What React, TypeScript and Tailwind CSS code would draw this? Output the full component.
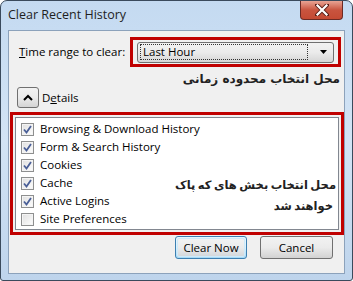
import React from "react";

const ui = { fontFamily: '"Open Sans", "Noto Sans", sans-serif' };
const fa = { fontFamily: '"DejaVu Sans", sans-serif' };

function Check({ checked }: { checked: boolean }) {
  return (
    <span className="w-[13px] h-[13px] border border-[#8e8f8f] bg-gradient-to-br from-[#dcdcdc] to-[#f8f8f8] flex items-center justify-center shrink-0">
      <span className="w-[11px] h-[11px] border border-[#f4f4f4] bg-gradient-to-br from-[#e2e2e2] to-[#fbfbfb] flex items-center justify-center">
        {checked && (
          <svg width="9" height="9" viewBox="0 0 9 9">
            <path d="M1 4.5 L3.5 7.5 L8 1" fill="none" stroke="#4a5f97" strokeWidth="1.8" />
          </svg>
        )}
      </span>
    </span>
  );
}

const items: [string, boolean][] = [
  ["Browsing & Download History", true],
  ["Form & Search History", true],
  ["Cookies", true],
  ["Cache", true],
  ["Active Logins", true],
  ["Site Preferences", false],
];

export default function App() {
  return (
    <div
      className="w-[353px] h-[281px] bg-gradient-to-b from-[#c4daf1] via-[#d3e4f5] to-[#bed4ec] border border-[#3a4a5c] rounded-t-[7px] rounded-b-[3px] flex flex-col overflow-hidden text-[11.5px] text-black"
      style={ui}
    >
      <div className="h-[29px] flex items-start justify-between pl-[7px] pr-[9px]">
        <span className="mt-[5px] text-[12.5px] text-[#1e1e1e]">Clear Recent History</span>
        <div className="w-[43px] h-[19px] rounded-b-[4px] border border-[#6b2a24] border-t-0 bg-gradient-to-b from-[#e8a394] via-[#c9543f] to-[#c44a33] flex items-center justify-center">
          <svg width="14" height="12" viewBox="0 0 14 12">
            <path d="M2 1 L12 11 M12 1 L2 11" stroke="#5a1f18" strokeWidth="4" strokeLinecap="square" />
            <path d="M2.5 1.5 L11.5 10.5 M11.5 1.5 L2.5 10.5" stroke="#ffffff" strokeWidth="2.2" strokeLinecap="square" />
          </svg>
        </div>
      </div>
      <div className="mx-[7px] h-[244px] border border-[#8ca2bb] bg-[#f0f0f0] flex flex-col">
        <div className="flex items-center mt-[6px] pl-[10px] pr-[3px] justify-between">
          <span>
            <span className="underline">T</span>ime range to clear:
          </span>
          <div className="w-[211px] h-[30px] border-[3px] border-[#c00000] flex items-center justify-center">
            <div className="w-[197px] h-[21px] border border-[#707070] rounded-[3px] bg-gradient-to-b from-[#f2f2f2] via-[#ebebeb] to-[#d6d6d6] flex items-center pl-[2px] pr-[6px]">
              <div className="flex-1 h-[16px] border border-dotted border-[#333] flex items-center pl-[2px] mr-[12px]">
                Last Hour
              </div>
              <svg width="7" height="4" viewBox="0 0 7 4">
                <path d="M0 0 L7 0 L3.5 4 Z" fill="#000" />
              </svg>
            </div>
          </div>
        </div>
        <div dir="rtl" className="pr-[4px] mt-[2px] h-[20px] flex items-center text-[12px] font-bold text-[#222]" style={fa}>
          محل انتخاب محدوده زمانی
        </div>
        <div className="flex items-center pl-[8px] mt-[-2px] gap-[3px]">
          <div className="w-[22px] h-[21px] border border-[#707070] rounded-[3px] bg-gradient-to-b from-[#f2f2f2] via-[#ebebeb] to-[#d4d4d4] flex items-center justify-center">
            <svg width="10" height="7" viewBox="0 0 10 7">
              <path d="M1 6 L5 2 L9 6" fill="none" stroke="#000" strokeWidth="2" />
            </svg>
          </div>
          <span>
            D<span className="underline">e</span>tails
          </span>
        </div>
        <div className="mt-[4px] ml-[1px] w-[334px] h-[123px] border-[3px] border-[#c00000] p-[2px]">
          <div className="h-full bg-white border border-[#828790] flex pl-[5px] pt-[2px]">
            <div className="flex flex-col w-[140px] shrink-0">
              {items.map(([label, c]) => (
                <div key={label} className="h-[18px] flex items-center gap-[6px]">
                  <Check checked={c} />
                  <span className="whitespace-nowrap">{label}</span>
                </div>
              ))}
            </div>
            <div dir="rtl" className="flex-1 flex flex-col items-start pr-[2px] pt-[55px] font-bold text-[11.5px] text-[#222] leading-[21px] whitespace-nowrap [word-spacing:-1.5px]" style={fa}>
              <span>محل انتخاب بخش های که پاک</span>
              <span className="pr-[3px]">خواهند شد</span>
            </div>
          </div>
        </div>
        <div className="flex justify-end gap-[13px] pr-[11px] mt-[1px]">
          <div className="w-[72px] h-[23px] rounded-[3px] border border-[#3c7fb1] bg-gradient-to-b from-[#eaf6fd] via-[#d9f0fc] to-[#a7d9f5] flex items-center justify-center p-[1px]">
            <div className="w-full h-full rounded-[2px] border border-[#cdeafa] flex items-center justify-center bg-gradient-to-b from-[#f2f2f2] via-[#ebebeb] to-[#d4d8dc]">
              Clear Now
            </div>
          </div>
          <div className="w-[73px] h-[23px] rounded-[3px] border border-[#707070] bg-gradient-to-b from-[#f2f2f2] via-[#ebebeb] to-[#d2d2d2] flex items-center justify-center">
            Cancel
          </div>
        </div>
      </div>
    </div>
  );
}
